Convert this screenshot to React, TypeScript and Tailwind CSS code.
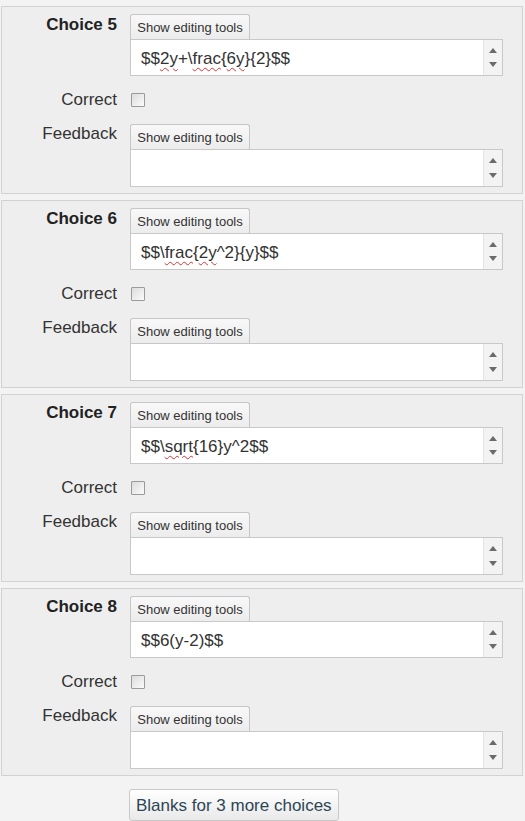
import React from 'react';

type Part = { t: string; bad?: boolean };

const CHOICES: { n: number; answer: Part[] }[] = [
  {
    n: 5,
    answer: [
      { t: '$$' },
      { t: '2y', bad: true },
      { t: '+\\' },
      { t: 'frac', bad: true },
      { t: '{' },
      { t: '6y', bad: true },
      { t: '}{2}$$' },
    ],
  },
  {
    n: 6,
    answer: [
      { t: '$$\\' },
      { t: 'frac', bad: true },
      { t: '{' },
      { t: '2y', bad: true },
      { t: '^2}{y}$$' },
    ],
  },
  {
    n: 7,
    answer: [{ t: '$$\\' }, { t: 'sqrt', bad: true }, { t: '{16}y^2$$' }],
  },
  { n: 8, answer: [{ t: '$$6(y-2)$$' }] },
];

const font = "font-['Liberation_Sans',Arial,sans-serif]";

const Scroller = () => (
  <div className="w-[19px] shrink-0 bg-[#f3f3f3] border-l border-[#e4e4e4] flex flex-col items-center justify-between py-[8px]">
    <svg width="8" height="5" viewBox="0 0 8 5">
      <polygon points="4,0 8,5 0,5" fill="#6b6b6b" />
    </svg>
    <svg width="8" height="5" viewBox="0 0 8 5">
      <polygon points="0,0 8,0 4,5" fill="#6b6b6b" />
    </svg>
  </div>
);

const EditorTab = () => (
  <div className="w-[120px] h-[25px] border border-b-0 border-[#c6c6c6] rounded-t-[3px] bg-gradient-to-b from-[#f8f8f8] to-[#ececec] flex items-center justify-center text-[13px] text-[#333] leading-none">
    Show editing tools
  </div>
);

const Editor = ({ parts, tall }: { parts: Part[]; tall?: boolean }) => (
  <div className="flex flex-col">
    <EditorTab />
    <div className={`${tall ? 'h-[38px]' : 'h-[37px]'} w-[373px] bg-white border border-[#c8c8c8] flex`}>
      <div className="flex-1 pl-[10px] pt-[2px] flex items-center text-[17px] text-[#333] leading-none whitespace-pre">
        {parts.map((p, i) => (
          <span
            key={i}
            className={p.bad ? 'underline decoration-wavy decoration-[#e03030] decoration-1 underline-offset-[3px]' : ''}
          >
            {p.t}
          </span>
        ))}
      </div>
      <Scroller />
    </div>
  </div>
);

const Checkbox = () => (
  <span className="block w-[14px] h-[14px] border border-[#9a9a9a] bg-gradient-to-br from-[#dcdcdc] to-[#fbfbfb] rounded-[1px]" />
);

export default function App() {
  return (
    <div className={`w-[525px] min-h-[821px] bg-[#f3f3f3] pt-[6px] pl-[1px] ${font}`}>
      <div className="flex flex-col gap-[6px] w-[522px]">
        {CHOICES.map(c => (
          <div
            key={c.n}
            className="border border-[#d2d2d2] bg-[#eeeeee] pt-[7px] pb-[6px] grid grid-cols-[115px_373px] gap-x-[13px] items-start"
          >
            <div className="text-right text-[17px] leading-[20px] font-bold text-[#222] mt-[1px]">Choice {c.n}</div>
            <Editor parts={c.answer} />

            <div className="mt-[14px] text-right text-[17px] leading-[20px] text-[#333]">Correct</div>
            <div className="mt-[14px] h-[20px] flex items-center pl-[1px]">
              <Checkbox />
            </div>

            <div className="mt-[14px] text-right text-[17px] leading-[20px] text-[#333]">Feedback</div>
            <div className="mt-[14px]">
              <Editor parts={[]} tall />
            </div>
          </div>
        ))}
      </div>

      <div className="pl-[128px] pt-[13px]">
        <button className="h-[32px] px-[6px] border border-[#c9c9c9] rounded-[3px] bg-gradient-to-b from-white to-[#e9e9e9] text-[17px] leading-none text-[#2e4556]">
          Blanks for 3 more choices
        </button>
      </div>
    </div>
  );
}
